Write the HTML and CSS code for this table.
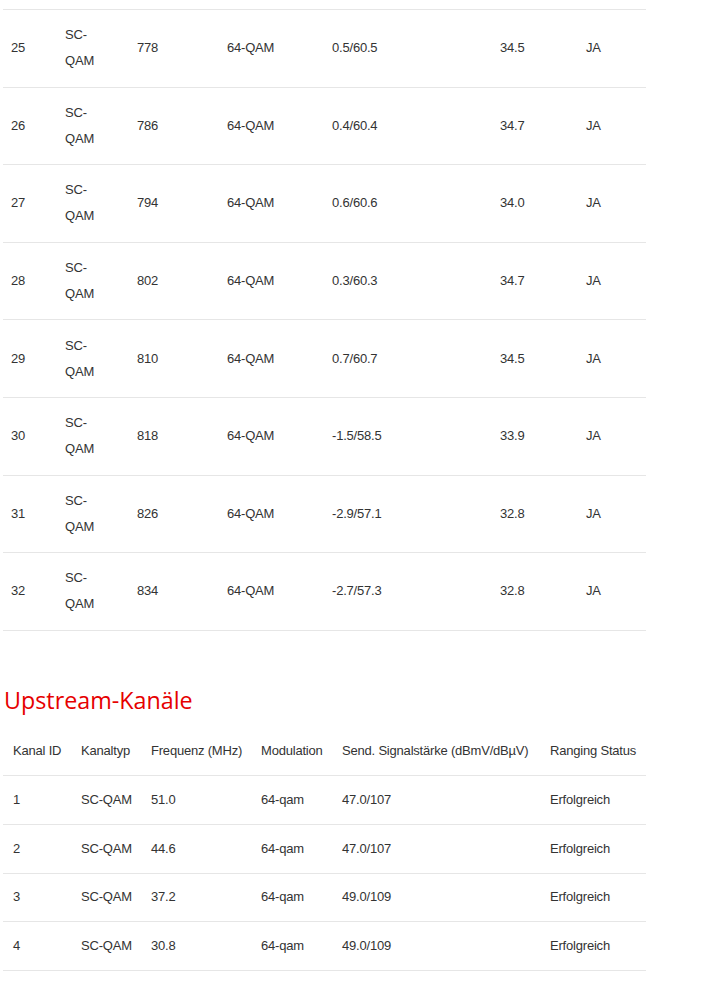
FILE: index.html
```html
<!DOCTYPE html>
<html lang="de">
<head>
<meta charset="utf-8">
<title>Kanäle</title>
<link rel="stylesheet" href="styles.css">
</head>
<body>
<div class="page">
  <table class="tbl down">
    <colgroup>
      <col class="d1"><col class="d2"><col class="d3"><col class="d4"><col class="d5"><col class="d6"><col class="d7">
    </colgroup>
    <tbody>
      <tr><td>25</td><td>SC-<br>QAM</td><td>778</td><td>64-QAM</td><td>0.5/60.5</td><td>34.5</td><td>JA</td></tr>
      <tr><td>26</td><td>SC-<br>QAM</td><td>786</td><td>64-QAM</td><td>0.4/60.4</td><td>34.7</td><td>JA</td></tr>
      <tr><td>27</td><td>SC-<br>QAM</td><td>794</td><td>64-QAM</td><td>0.6/60.6</td><td>34.0</td><td>JA</td></tr>
      <tr><td>28</td><td>SC-<br>QAM</td><td>802</td><td>64-QAM</td><td>0.3/60.3</td><td>34.7</td><td>JA</td></tr>
      <tr><td>29</td><td>SC-<br>QAM</td><td>810</td><td>64-QAM</td><td>0.7/60.7</td><td>34.5</td><td>JA</td></tr>
      <tr><td>30</td><td>SC-<br>QAM</td><td>818</td><td>64-QAM</td><td>-1.5/58.5</td><td>33.9</td><td>JA</td></tr>
      <tr><td>31</td><td>SC-<br>QAM</td><td>826</td><td>64-QAM</td><td>-2.9/57.1</td><td>32.8</td><td>JA</td></tr>
      <tr><td>32</td><td>SC-<br>QAM</td><td>834</td><td>64-QAM</td><td>-2.7/57.3</td><td>32.8</td><td>JA</td></tr>
    </tbody>
  </table>

  <h2 class="section-title">Upstream-Kanäle</h2>

  <table class="tbl up">
    <colgroup>
      <col class="u1"><col class="u2"><col class="u3"><col class="u4"><col class="u5"><col class="u6">
    </colgroup>
    <thead>
      <tr><th>Kanal ID</th><th>Kanaltyp</th><th>Frequenz (MHz)</th><th>Modulation</th><th>Send. Signalstärke (dBmV/dBµV)</th><th>Ranging Status</th></tr>
    </thead>
    <tbody>
      <tr><td>1</td><td>SC-QAM</td><td>51.0</td><td>64-qam</td><td>47.0/107</td><td>Erfolgreich</td></tr>
      <tr><td>2</td><td>SC-QAM</td><td>44.6</td><td>64-qam</td><td>47.0/107</td><td>Erfolgreich</td></tr>
      <tr><td>3</td><td>SC-QAM</td><td>37.2</td><td>64-qam</td><td>49.0/109</td><td>Erfolgreich</td></tr>
      <tr><td>4</td><td>SC-QAM</td><td>30.8</td><td>64-qam</td><td>49.0/109</td><td>Erfolgreich</td></tr>
    </tbody>
  </table>
</div>
</body>
</html>
```

FILE: styles.css
```css
html, body {
  margin: 0;
  padding: 0;
  background: #ffffff;
}

body {
  font-family: "Liberation Sans", Arial, sans-serif;
  font-size: 13px;
  letter-spacing: -0.2px;
  color: #333333;
}

.page {
  padding: 9px 0 0 3px;
  width: 643px;
}

.tbl {
  width: 643px;
  border-collapse: collapse;
  table-layout: fixed;
}

.tbl td,
.tbl th {
  text-align: left;
  font-weight: normal;
  vertical-align: middle;
  line-height: 26px;
  white-space: nowrap;
}

.down td {
  padding: 12.3px 8px;
}

.down tr {
  border-top: 1px solid #e6e6e6;
}

.down tr:last-child {
  border-bottom: 1px solid #e6e6e6;
}

.d1 { width: 54px; }
.d2 { width: 72px; }
.d3 { width: 90px; }
.d4 { width: 105px; }
.d5 { width: 168px; }
.d6 { width: 86px; }
.d7 { width: 68px; }

.section-title {
  font-family: "Open Sans", "Noto Sans", sans-serif;
  font-weight: normal;
  font-size: 23.3px;
  letter-spacing: 0;
  line-height: 32px;
  color: #e60000;
  margin: 53.5px 0 0 1px;
  padding: 0;
}

.up {
  margin-top: 11px;
}

.up th,
.up td {
  padding: 10.9px 4px 10.9px 10px;
}

.up tbody tr {
  border-top: 1px solid #e6e6e6;
}

.up tbody tr:last-child {
  border-bottom: 1px solid #e6e6e6;
}

.u1 { width: 68px; }
.u2 { width: 70px; }
.u3 { width: 110px; }
.u4 { width: 81px; }
.u5 { width: 208px; }
.u6 { width: 106px; }
```
